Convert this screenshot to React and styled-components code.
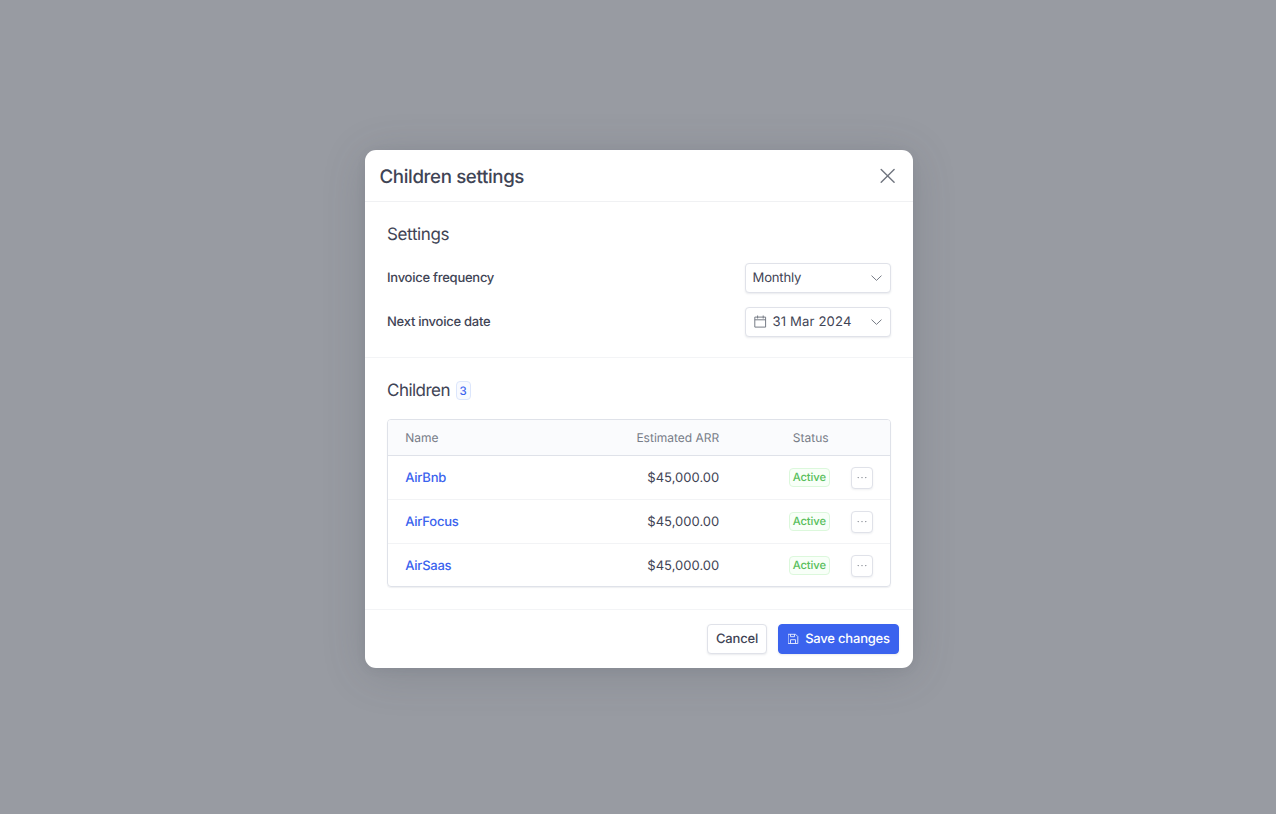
import React from "react";
import styled, { createGlobalStyle } from "styled-components";

const GlobalStyle = createGlobalStyle`
  *, *::before, *::after { box-sizing: border-box; }
  html, body { margin: 0; padding: 0; }
  body {
    font-family: Inter, "Liberation Sans", sans-serif;
    color: #3f4455;
    background: #989ba2;
    -webkit-font-smoothing: antialiased;
    text-rendering: geometricPrecision;
  }
  button { font: inherit; color: inherit; margin: 0; cursor: pointer; text-rendering: inherit; }
`;

const Overlay = styled.div`
  height: 100vh;
  padding: 4px 0 0 2px;
  display: flex;
  align-items: center;
  justify-content: center;
  overflow: hidden;
  background: #989ba2;
`;

const Dialog = styled.section`
  width: 548px;
  height: 518px;
  display: flex;
  flex-direction: column;
  background: #fff;
  border-radius: 11px;
  box-shadow: 0 6px 44px rgba(70, 75, 86, 0.2), 0 2px 10px rgba(70, 75, 86, 0.08);
`;

const Header = styled.header`
  height: 52px;
  flex: none;
  display: flex;
  align-items: center;
  justify-content: space-between;
  padding: 0 18px 0 14.5px;
  border-bottom: 1px solid #f0f1f3;
`;

const Title = styled.h1`
  margin: 0;
  padding-top: 2px;
  font-size: 18.7px;
  line-height: 24px;
  font-weight: 460;
  letter-spacing: -0.37px;
`;

const CloseButton = styled.button`
  display: flex;
  padding: 0;
  border: 0;
  background: none;
  color: #70757f;
`;

const Section = styled.div`
  flex: none;
  height: ${(p) => p.$height}px;
  padding: 21px 22px 0;
  border-bottom: 1px solid #f3f4f6;
`;

const SectionTitle = styled.h2`
  display: flex;
  align-items: center;
  gap: 5.5px;
  margin: 0;
  height: 24px;
  font-size: 17px;
  line-height: 24px;
  font-weight: 380;
  letter-spacing: ${(p) => p.$spacing}px;
`;

const Count = styled.span`
  width: 15px;
  height: 19px;
  margin-bottom: 1px;
  display: flex;
  align-items: center;
  justify-content: center;
  border: 1px solid #dce6fc;
  border-radius: 4px;
  background: #f8faff;
  color: #3b63ee;
  font-size: 11.5px;
  font-weight: 470;
  letter-spacing: 0;
`;

const Fields = styled.div`
  display: grid;
  gap: 14px;
  margin-top: 16px;
`;

const Field = styled.div`
  height: 30px;
  display: flex;
  align-items: center;
  justify-content: space-between;
`;

const Label = styled.span`
  font-size: 13px;
  line-height: 18px;
  font-weight: 460;
  letter-spacing: -0.26px;
`;

const Select = styled.button`
  width: 146px;
  height: 30px;
  display: flex;
  align-items: center;
  padding: 0 8px 0 6.5px;
  border: 1px solid #e0e2e9;
  border-radius: 4px;
  background: #fff;
  box-shadow: 0 1px 2px rgba(50, 60, 90, 0.1);
  font-size: 13.1px;
  line-height: 18px;
  letter-spacing: ${(p) => p.$spacing || 0}px;

  svg { color: #777c86; flex: none; }
  svg:last-child { margin-left: auto; }
`;

const SelectText = styled.span`
  margin-left: ${(p) => (p.$icon ? 6 : 0)}px;
`;

const Table = styled.div`
  margin-top: 16px;
  height: 168px;
  border: 1px solid #dfe2e9;
  border-radius: 4px;
  box-shadow: 0 1px 1px rgba(50, 60, 90, 0.08);
  overflow: hidden;
`;

const Row = styled.div`
  display: grid;
  grid-template-columns: 200px 114px 69.5px 41px 1fr;
  align-items: center;
  height: 44px;
  padding-left: 17.3px;
  font-size: 13px;
  line-height: 18px;
  border-bottom: 1px solid #f2f3f5;
  &:last-child { border-bottom: 0; height: 43px; }
`;

const HeadRow = styled(Row)`
  height: 36px;
  background: #fafbfd;
  border-bottom-color: #dfe2e9;
  color: #777c87;
  font-size: 12px;
  line-height: 17px;
  font-weight: 420;
`;

const Amount = styled.span`
  text-align: right;
`;

const RowAmount = styled(Amount)`
  padding-top: 1px;
  letter-spacing: 0.02px;
`;

const StatusHead = styled.span`
  grid-column: 4;
  margin-left: 4px;
`;

const NameLink = styled.a`
  padding-top: 1px;
  color: #3b63ee;
  font-weight: 470;
  letter-spacing: -0.24px;
`;

const Status = styled.span`
  grid-column: 4;
  height: 19px;
  display: flex;
  align-items: center;
  justify-content: center;
  padding-bottom: 1px;
  border: 1px solid #dcf8dc;
  border-radius: 4px;
  background: #f8fff8;
  color: #57be5b;
  font-size: 11.2px;
  font-weight: 490;
  letter-spacing: -0.1px;
`;

const MoreButton = styled.button`
  width: 22px;
  height: 22px;
  margin-left: 21px;
  display: flex;
  align-items: center;
  justify-content: center;
  padding: 0;
  border: 1px solid #e0e2e9;
  border-radius: 4px;
  background: #fff;
  color: #70757f;
  box-shadow: 0 1px 2px rgba(50, 60, 90, 0.08);
`;

const Footer = styled.footer`
  flex: 1;
  display: flex;
  justify-content: flex-end;
  align-items: center;
  gap: 11px;
  padding: 0 14px 0 0;
`;

const Button = styled.button`
  width: ${(p) => p.$width}px;
  height: 30px;
  display: flex;
  align-items: center;
  justify-content: center;
  gap: 6px;
  padding: 0;
  border: 1px solid ${(p) => (p.$primary ? "#3b63ee" : "#e0e2e9")};
  border-radius: 4px;
  background: ${(p) => (p.$primary ? "#3b63ee" : "#fff")};
  color: ${(p) => (p.$primary ? "#fff" : "#3f4455")};
  box-shadow: 0 1px 2px rgba(50, 60, 90, 0.1);
  font-size: 13px;
  line-height: 18px;
  font-weight: 460;
  letter-spacing: -0.2px;

  svg { opacity: 0.85; }
`;

const line = { fill: "none", stroke: "currentColor", strokeLinecap: "round", strokeLinejoin: "round" };

const CloseIcon = () => (
  <svg width="15" height="15" viewBox="0 0 15 15" {...line} strokeWidth="1.4">
    <path d="M1.2 1.4l12.9 12.9M14.1 1.4L1.2 14.3" />
  </svg>
);

const ChevronIcon = () => (
  <svg width="12" height="8" viewBox="0 0 12 8" {...line} strokeWidth="1">
    <path d="M1.8 1.9L6.5 6.4l4.7-4.5" />
  </svg>
);

const CalendarIcon = () => (
  <svg width="14" height="14" viewBox="0 0 14 14" {...line} strokeWidth="1">
    <path d="M2.2 2.1h10.4v10H2.2zM2.2 4.8h10.4M4.6 0.9v2.2M10.2 0.9v2.2" />
  </svg>
);

const SaveIcon = () => (
  <svg width="12" height="12" viewBox="0 0 12 12" {...line} strokeWidth="0.95">
    <path d="M1.5 1.3h7.1l2.2 2.2v7H1.5zM3.5 1.5v2.2h4V1.5M3.5 10.3V6.7h5v3.6" />
  </svg>
);

const DotsIcon = () => (
  <svg width="10" height="4" viewBox="0 0 10 4" fill="currentColor">
    <circle cx="1.2" cy="1.6" r="0.65" />
    <circle cx="5" cy="1.6" r="0.65" />
    <circle cx="8.8" cy="1.6" r="0.65" />
  </svg>
);

const children = [
  { name: "AirBnb", arr: "$45,000.00", status: "Active" },
  { name: "AirFocus", arr: "$45,000.00", status: "Active" },
  { name: "AirSaas", arr: "$45,000.00", status: "Active" },
];

export default function App() {
  return (
    <>
      <GlobalStyle />
      <Overlay>
        <Dialog role="dialog" aria-label="Children settings">
          <Header>
            <Title>Children settings</Title>
            <CloseButton aria-label="Close"><CloseIcon /></CloseButton>
          </Header>
          <Section $height={156}>
            <SectionTitle $spacing={-0.36}>Settings</SectionTitle>
            <Fields>
              <Field>
                <Label>Invoice frequency</Label>
                <Select $spacing={-0.2}>
                  <SelectText>Monthly</SelectText>
                  <ChevronIcon />
                </Select>
              </Field>
              <Field>
                <Label>Next invoice date</Label>
                <Select $spacing={0.15}>
                  <CalendarIcon />
                  <SelectText $icon>31 Mar 2024</SelectText>
                  <ChevronIcon />
                </Select>
              </Field>
            </Fields>
          </Section>
          <Section $height={252}>
            <SectionTitle $spacing={-0.52}>Children <Count>3</Count></SectionTitle>
            <Table>
              <HeadRow>
                <span>Name</span>
                <Amount>Estimated ARR</Amount>
                <StatusHead>Status</StatusHead>
              </HeadRow>
              {children.map((child) => (
                <Row key={child.name}>
                  <NameLink>{child.name}</NameLink>
                  <RowAmount>{child.arr}</RowAmount>
                  <Status>{child.status}</Status>
                  <MoreButton aria-label="More"><DotsIcon /></MoreButton>
                </Row>
              ))}
            </Table>
          </Section>
          <Footer>
            <Button $width={60}>Cancel</Button>
            <Button $primary $width={121}><SaveIcon />Save changes</Button>
          </Footer>
        </Dialog>
      </Overlay>
    </>
  );
}
